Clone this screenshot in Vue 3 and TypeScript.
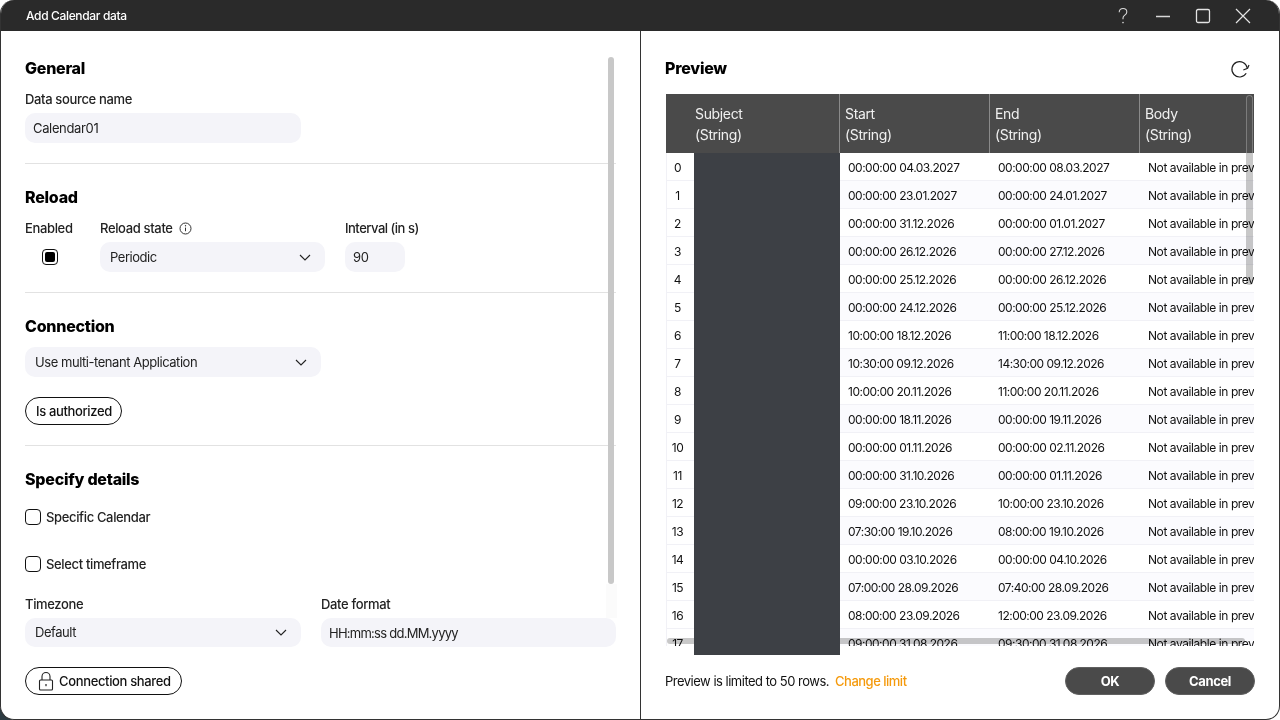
<script setup lang="ts">
const rows = [
  ["00:00:00 04.03.2027", "00:00:00 08.03.2027"],
  ["00:00:00 23.01.2027", "00:00:00 24.01.2027"],
  ["00:00:00 31.12.2026", "00:00:00 01.01.2027"],
  ["00:00:00 26.12.2026", "00:00:00 27.12.2026"],
  ["00:00:00 25.12.2026", "00:00:00 26.12.2026"],
  ["00:00:00 24.12.2026", "00:00:00 25.12.2026"],
  ["10:00:00 18.12.2026", "11:00:00 18.12.2026"],
  ["10:30:00 09.12.2026", "14:30:00 09.12.2026"],
  ["10:00:00 20.11.2026", "11:00:00 20.11.2026"],
  ["00:00:00 18.11.2026", "00:00:00 19.11.2026"],
  ["00:00:00 01.11.2026", "00:00:00 02.11.2026"],
  ["00:00:00 31.10.2026", "00:00:00 01.11.2026"],
  ["09:00:00 23.10.2026", "10:00:00 23.10.2026"],
  ["07:30:00 19.10.2026", "08:00:00 19.10.2026"],
  ["00:00:00 03.10.2026", "00:00:00 04.10.2026"],
  ["07:00:00 28.09.2026", "07:40:00 28.09.2026"],
  ["08:00:00 23.09.2026", "12:00:00 23.09.2026"],
  ["09:00:00 31.08.2026", "09:30:00 31.08.2026"],
]
const columns = ["Subject", "Start", "End", "Body"]
</script>

<template>
  <div class="stage">
    <div class="corner"></div>
    <div class="window">
      <header class="titlebar">
        <span class="title">Add Calendar data</span>
        <div class="controls">
          <svg width="16" height="18" viewBox="0 0 16 18"><path d="M4.2 5.2c0-2.4 1.7-3.7 3.8-3.7s3.8 1.3 3.8 3.4c0 1.5-.8 2.4-2 3.2-1.2.8-1.8 1.5-1.8 3v1.2" stroke="#d8d8d8" stroke-width="1.1" fill="none" /><circle cx="8" cy="15.6" r=".8" fill="#d8d8d8" /></svg>
          <svg width="16" height="16" viewBox="0 0 16 16"><path d="M1 8.5h14" stroke="#d8d8d8" stroke-width="1.3" fill="none" /></svg>
          <svg width="16" height="16" viewBox="0 0 16 16"><rect x="1.5" y="1.5" width="13" height="13" rx="1.5" stroke="#e4e4e4" stroke-width="1.3" fill="none" /></svg>
          <svg width="16" height="16" viewBox="0 0 16 16"><path d="M1 1l14 14M15 1L1 15" stroke="#e4e4e4" stroke-width="1.2" fill="none" /></svg>
        </div>
      </header>

      <div class="body">
        <section class="left">
          <div class="form">
            <div class="block general">
              <h2>General</h2>
              <label class="lbl">Data source name</label>
              <div class="field w276">Calendar01</div>
            </div>

            <div class="block reload">
              <h2>Reload</h2>
              <div class="row">
                <div class="col enabled">
                  <label class="lbl">Enabled</label>
                  <div class="check-wrap"><span class="check on"><i></i></span></div>
                </div>
                <div class="col state">
                  <label class="lbl">Reload state
                    <svg class="info" width="13" height="13" viewBox="0 0 13 13">
                      <circle cx="6.5" cy="6.5" r="5.5" stroke="#333" fill="none" />
                      <path d="M6.5 5.6v3.6" stroke="#333" fill="none" />
                      <circle cx="6.5" cy="3.8" r=".7" fill="#333" />
                    </svg>
                  </label>
                  <div class="field select">Periodic
                    <svg width="12" height="7" viewBox="0 0 12 7"><path d="M1 1l5 5 5-5" stroke="#222" stroke-width="1.1" fill="none" /></svg>
                  </div>
                </div>
                <div class="col interval">
                  <label class="lbl tight">Interval (in s)</label>
                  <div class="field">90</div>
                </div>
              </div>
            </div>

            <div class="block connection">
              <h2>Connection</h2>
              <div class="field select w296">Use multi-tenant Application
                <svg width="12" height="7" viewBox="0 0 12 7"><path d="M1 1l5 5 5-5" stroke="#222" stroke-width="1.1" fill="none" /></svg>
              </div>
              <button class="pill auth">Is authorized</button>
            </div>

            <div class="block details">
              <h2>Specify details</h2>
              <div class="checkline first"><span class="check"></span>Specific Calendar</div>
              <div class="checkline"><span class="check"></span>Select timeframe</div>
              <div class="row pair">
                <div class="col tz">
                  <label class="lbl">Timezone</label>
                  <div class="field select">Default
                    <svg width="12" height="7" viewBox="0 0 12 7"><path d="M1 1l5 5 5-5" stroke="#222" stroke-width="1.1" fill="none" /></svg>
                  </div>
                </div>
                <div class="col fmt">
                  <label class="lbl">Date format</label>
                  <div class="field datefmt">HH:mm:ss dd.MM.yyyy</div>
                </div>
              </div>
              <button class="pill shared">
                <svg width="16" height="20" viewBox="0 0 16 20">
                  <path d="M4 9V5.5a4 4 0 0 1 8 0V9" stroke="#222" stroke-width="1.1" fill="none" />
                  <rect x="1.5" y="9" width="13" height="10" rx="1" stroke="#222" stroke-width="1.1" fill="none" />
                  <rect x="7.4" y="13" width="1.2" height="2.2" fill="#222" />
                </svg>
                Connection shared
              </button>
            </div>
          </div>
          <div class="vtrack"></div>
          <div class="vthumb"></div>
        </section>

        <section class="right">
          <div class="preview-head">
            <h2>Preview</h2>
            <svg class="refresh" width="20" height="20" viewBox="0 0 20 20">
              <path d="M16.2 13.3A7.7 7.7 0 1 1 17.2 8" stroke="#222" stroke-width="1.2" fill="none" />
              <path d="M13.3 10l4.3-1.700L19 5" stroke="#222" stroke-width="1.2" fill="none" />
            </svg>
          </div>

          <div class="table-wrap">
            <div class="thead">
              <div class="th idx"></div>
              <div v-for="c in columns" :key="c" class="th" :class="c.toLowerCase()">{{ c }}<br />(String)</div>
            </div>
            <div v-for="(r, i) in rows" :key="i" class="tr" :class="{ alt: i % 2 === 1 }">
              <div class="td idx">{{ i }}</div>
              <div class="td subject"></div>
              <div class="td start">{{ r[0] }}</div>
              <div class="td end">{{ r[1] }}</div>
              <div class="td body-col">Not available in preview</div>
            </div>
            <div class="hbar"></div>
            <div class="vbar-cap"></div>
            <div class="vbar"></div>
          </div>
          <div class="redact"></div>

          <div class="foot">
            <span class="limit">Preview is limited to 50 rows.</span>
            <a class="change">Change limit</a>
            <div class="buttons">
              <button class="dark">OK</button>
              <button class="dark">Cancel</button>
            </div>
          </div>
        </section>
      </div>
    </div>
  </div>
</template>

<style>
html, body { margin: 0; background: #fff; }
</style>

<style scoped>
.stage {
  position: relative;
  width: 1280px;
  height: 720px;
}
.corner {
  position: absolute;
  left: 0;
  bottom: 0;
  width: 12px;
  height: 12px;
  background: #2d3b42;
}
.window {
  position: relative;
  width: 1280px;
  height: 720px;
  box-sizing: border-box;
  display: flex;
  flex-direction: column;
  background: #fff;
  border: 1px solid #333;
  border-top: none;
  border-radius: 14px;
  overflow: hidden;
  font-family: Inter, "Liberation Sans", sans-serif;
  font-size: 13px;
  color: #111;
  letter-spacing: -0.35px;
}
.titlebar {
  height: 31px;
  flex: none;
  margin: 0 -1px;
  background: #2a2a2a;
  color: #fff;
  display: flex;
  align-items: center;
  justify-content: space-between;
  padding: 0 29px 0 26px;
}
.title { font-size: 12px; font-weight: 500; }
.controls { display: flex; align-items: center; gap: 24px; }
.body { flex: 1; display: flex; min-height: 0; }

.left {
  width: 640px;
  flex: none;
  box-sizing: border-box;
  border-right: 1px solid #333;
  padding: 0 24px;
  position: relative;
}
.form { width: 591px; }
h2 {
  margin: 0;
  font-size: 16px;
  font-weight: 800;
  line-height: 20px;
  color: #000;
  letter-spacing: -0.25px;
}
.block { border-bottom: 1px solid #e2e2e2; }
.general { padding-top: 27px; height: 133px; box-sizing: border-box; }
.reload { padding-top: 23px; height: 129px; box-sizing: border-box; }
.connection { padding-top: 23px; height: 153px; box-sizing: border-box; }
.details { padding-top: 23px; border-bottom: none; }
.lbl {
  display: block;
  font-weight: 500;
  line-height: 16px;
  margin-top: 13px;
  margin-bottom: 6px;
  color: #222;
  white-space: nowrap;
}
.lbl.tight { letter-spacing: -0.5px; }
.field {
  height: 30px;
  box-sizing: border-box;
  background: #f4f4f9;
  border-radius: 10px;
  padding: 0 8px;
  line-height: 30px;
  color: #222;
}
.general .field { line-height: 31px; }
.w276 { width: 276px; }
.w296 { width: 296px; margin-top: 11px; }
.select {
  display: flex;
  align-items: center;
  justify-content: space-between;
  padding: 0 14px 0 10px;
  letter-spacing: -0.45px;
}
.row { display: flex; }
.enabled { width: 75px; }
.state { width: 225px; margin-right: 20px; }
.interval { width: 60px; }
.info { vertical-align: -2px; margin-left: 3px; }
.check-wrap { height: 30px; display: flex; align-items: center; padding-left: 17px; }
.check {
  width: 14px;
  height: 14px;
  border: 1px solid #111;
  border-radius: 4px;
  display: inline-flex;
  align-items: center;
  justify-content: center;
  flex: none;
  background: #fff;
}
.check.on i { width: 10px; height: 10px; background: #000; border-radius: 2px; }
.pill {
  display: flex;
  align-items: center;
  height: 28px;
  box-sizing: border-box;
  border: 1px solid #111;
  border-radius: 14px;
  background: #fff;
  font: inherit;
  font-weight: 500;
  letter-spacing: inherit;
  color: #111;
  padding: 0 10px;
  white-space: nowrap;
}
.auth { margin-top: 20px; width: 97px; }
.checkline {
  display: flex;
  align-items: center;
  gap: 5px;
  height: 20px;
  font-weight: 500;
  margin-top: 27px;
  color: #222;
}
.checkline.first { margin-top: 18px; }
.pair { margin-top: 0; gap: 20px; }
.pair .lbl { margin-top: 22px; }
.tz { width: 276px; }
.fmt { width: 295px; }
.pair .field { height: 29px; line-height: 31px; }
.datefmt { letter-spacing: -0.75px; }
.shared { margin-top: 20px; width: 157px; gap: 5px; padding: 0 10px 0 12px; }
.vtrack {
  position: absolute;
  left: 605px;
  top: 553px;
  width: 11px;
  height: 34px;
  background: #fbfbfb;
}
.vthumb {
  position: absolute;
  left: 607px;
  top: 26px;
  width: 6px;
  height: 527px;
  background: #c8c8c8;
  border-radius: 3px;
}

.right {
  flex: 1;
  min-width: 0;
  position: relative;
  padding: 0 24px;
}
.preview-head {
  display: flex;
  align-items: flex-start;
  justify-content: space-between;
  padding-top: 27px;
  height: 63px;
  box-sizing: border-box;
  padding-right: 5px;
}
.refresh { margin-top: 2px; }
.table-wrap {
  position: relative;
  margin-left: 1px;
  width: 588px;
  height: 552px;
  overflow: hidden;
  background: #fff;
  font-size: 12px;
  letter-spacing: -0.5px;
}
.thead {
  display: flex;
  height: 59px;
  background: #4a4a4a;
  color: #f0f0f0;
  font-size: 14px;
  line-height: 21px;
  letter-spacing: -0.35px;
}
.th {
  flex: none;
  box-sizing: border-box;
  padding: 9px 5px;
  border-right: 1px solid #8a8a8a;
}
.th.idx { width: 28px; border: none; }
.th.subject { width: 146px; padding-left: 1px; }
.th.start, .th.end { width: 150px; }
.th.body { width: 114px; border: none; }
.tr {
  display: flex;
  height: 28px;
  line-height: 29px;
  box-sizing: border-box;
  border-bottom: 1px solid #f1f1f6;
  white-space: nowrap;
}
.tr.alt { background: #fbfbfe; }
.td { flex: none; overflow: hidden; box-sizing: border-box; padding-left: 8px; }
.td.idx { width: 28px; padding: 0 6px 0 0; text-align: center; background: #fff; border-left: 1px solid #f1f1f6; }
.td.subject { width: 146px; }
.td.start, .td.end { width: 150px; }
.td.body-col { width: 114px; letter-spacing: -0.42px; }
.hbar {
  position: absolute;
  left: 1px;
  right: 9px;
  top: 544px;
  height: 6px;
  border-radius: 3px;
  background: #c8c8c8;
  mix-blend-mode: multiply;
}
.vbar-cap {
  position: absolute;
  right: 1px;
  top: 1px;
  width: 7px;
  height: 58px;
  box-sizing: border-box;
  background: #505050;
  border: 1px solid #7c7c7c;
  border-bottom: none;
  border-radius: 4px 4px 0 0;
}
.vbar {
  position: absolute;
  right: 1px;
  top: 59px;
  width: 7px;
  height: 132px;
  background: #c8c8c8;
  border-radius: 0 0 4px 4px;
  mix-blend-mode: multiply;
}
.redact {
  position: absolute;
  left: 53px;
  top: 122px;
  width: 146px;
  height: 502px;
  background: #3d4045;
}
.foot {
  display: flex;
  align-items: center;
  height: 28px;
  margin-top: 21px;
  color: #111;
  letter-spacing: -0.5px;
}
.change { color: #f59a0c; margin-left: 6px; font-weight: 500; letter-spacing: -0.5px; }
.buttons { margin-left: auto; display: flex; gap: 10px; }
.dark {
  width: 90px;
  height: 28px;
  border: 1px solid #606060;
  border-radius: 14px;
  background: #4a4a4a;
  color: #fff;
  font: inherit;
  font-weight: 700;
  letter-spacing: -0.4px;
}
</style>
